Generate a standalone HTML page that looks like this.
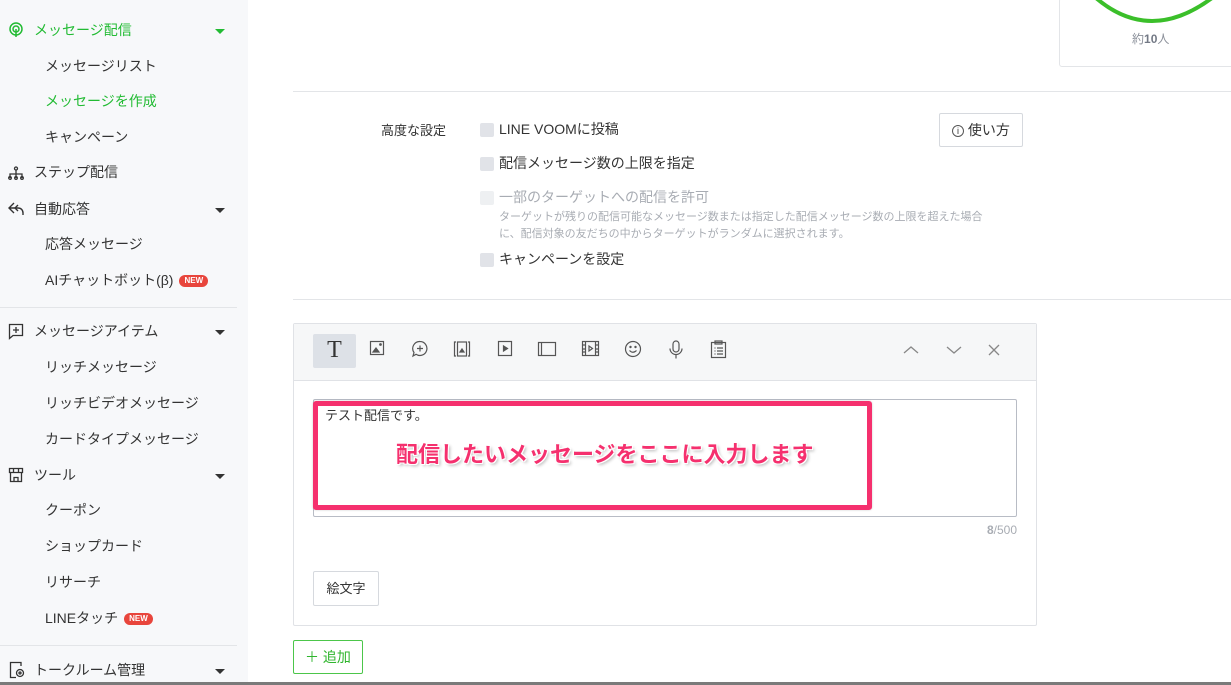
<!DOCTYPE html>
<html><head><meta charset="utf-8"><style>
*{box-sizing:border-box;margin:0;padding:0}
body{width:1231px;height:685px;overflow:hidden;background:#fff;font-family:"Liberation Sans","Noto Sans CJK JP",sans-serif;color:#333;position:relative}
.abs{position:absolute}
#side{left:0;top:0;width:248px;height:685px;background:#f7f8fa}
.it{position:absolute;font-size:14px;color:#333;line-height:20px}
.sub{left:45px}
.top{left:34px}
.arr{position:absolute;left:215px;width:0;height:0;border-left:5px solid transparent;border-right:5px solid transparent;border-top:5px solid #333}
.new{display:inline-block;background:#e8453c;color:#fff;font-size:8px;font-weight:bold;border-radius:7px;padding:1px 5px;line-height:10px;vertical-align:2px;margin-left:6px}
.hr{position:absolute;height:1px;background:#e3e5e8}
.cb{position:absolute;width:14px;height:14px;background:#e1e3e8;border-radius:2px;left:480px}
.lbl{position:absolute;left:499px;font-size:14px;color:#333;line-height:20px}
.ti{position:absolute;top:340px}
</style></head><body>
<div id="side" class="abs">
<svg class="abs" style="left:8px;top:22px" width="16" height="16" viewBox="0 0 16 16" fill="none" stroke="#22bb33" stroke-width="1.5"><circle cx="8" cy="7" r="6"/><circle cx="8" cy="7" r="3"/><path d="M8 7v8"/></svg>
<div class="it top" style="top:20px;color:#22bb33">メッセージ配信</div><div class="arr" style="top:29px;border-top-color:#22bb33"></div>
<div class="it sub" style="top:56px">メッセージリスト</div>
<div class="it sub" style="top:91px;color:#22bb33">メッセージを作成</div>
<div class="it sub" style="top:127px">キャンペーン</div>
<svg class="abs" style="left:8px;top:166px" width="16" height="14" viewBox="0 0 16 14" fill="none" stroke="#333" stroke-width="1.3"><circle cx="8" cy="2.5" r="1.5"/><path d="M8 4v4M2 12V8h12v4M8 8v4"/><circle cx="2" cy="12" r="1.3"/><circle cx="8" cy="12" r="1.3"/><circle cx="14" cy="12" r="1.3"/></svg>
<div class="it top" style="top:162px">ステップ配信</div>
<svg class="abs" style="left:7px;top:201px" width="18" height="16" viewBox="0 0 18 16" fill="none" stroke="#333" stroke-width="1.4"><path d="M7 2L2 7l5 5M2 7h9c3 0 5 2 5 5v2"/><path d="M11 4l-3 3 3 3"/></svg>
<div class="it top" style="top:199px">自動応答</div><div class="arr" style="top:208px"></div>
<div class="it sub" style="top:234px">応答メッセージ</div>
<div class="it sub" style="top:270px">AIチャットボット(β)<span class="new">NEW</span></div>
<div class="hr" style="left:0;top:307px;width:237px"></div>
<svg class="abs" style="left:8px;top:323px" width="16" height="17" viewBox="0 0 16 17" fill="none" stroke="#333" stroke-width="1.3"><path d="M1.5 1.5h13v11H5l-3.5 3z"/><path d="M8 4v6M5 7h6"/></svg>
<div class="it top" style="top:321px">メッセージアイテム</div><div class="arr" style="top:330px"></div>
<div class="it sub" style="top:357px">リッチメッセージ</div>
<div class="it sub" style="top:393px">リッチビデオメッセージ</div>
<div class="it sub" style="top:429px">カードタイプメッセージ</div>
<svg class="abs" style="left:8px;top:467px" width="16" height="16" viewBox="0 0 16 16" fill="none" stroke="#333" stroke-width="1.3"><path d="M1.5 1.5h13v4h-13zM2.5 5.5v9h11v-9M6 14.5v-4h4v4M5.5 1.5v4M10.5 1.5v4"/></svg>
<div class="it top" style="top:465px">ツール</div><div class="arr" style="top:474px"></div>
<div class="it sub" style="top:500px">クーポン</div>
<div class="it sub" style="top:536px">ショップカード</div>
<div class="it sub" style="top:572px">リサーチ</div>
<div class="it sub" style="top:608px">LINEタッチ<span class="new">NEW</span></div>
<div class="hr" style="left:0;top:645px;width:237px"></div>
<svg class="abs" style="left:9px;top:661px" width="16" height="18" viewBox="0 0 16 18" fill="none" stroke="#333" stroke-width="1.3"><path d="M12 5V1.5H1.5v15H7"/><circle cx="11" cy="12" r="3.5"/><circle cx="11" cy="12" r="1"/></svg>
<div class="it top" style="top:660px">トークルーム管理</div><div class="arr" style="top:669px"></div>
</div>

<div class="abs" style="left:1059px;top:-2px;width:180px;height:69px;border:1px solid #e3e5e8;border-radius:3px"></div>
<svg class="abs" style="left:1090px;top:0" width="130" height="25" viewBox="0 0 130 25"><path d="M6 -2 Q60 44 122 -2" fill="none" stroke="#3bbf2a" stroke-width="4"/></svg>
<div class="abs" style="left:1132px;top:30px;font-size:12px;color:#8a8f99">約<b style="color:#737985">10</b>人</div>

<div class="hr" style="left:293px;top:91px;width:938px"></div>
<div class="abs" style="left:381px;top:120px;font-size:13px;color:#333">高度な設定</div>
<div class="cb" style="top:123px"></div><div class="lbl" style="top:119px">LINE VOOMに投稿</div>
<div class="cb" style="top:157px"></div><div class="lbl" style="top:153px">配信メッセージ数の上限を指定</div>
<div class="cb" style="top:191px;background:#eef0f2"></div><div class="lbl" style="top:187px;color:#a8acb3">一部のターゲットへの配信を許可</div>
<div class="abs" style="left:499px;top:209px;font-size:11px;line-height:17px;color:#a8acb3;width:500px">ターゲットが残りの配信可能なメッセージ数または指定した配信メッセージ数の上限を超えた場合<br>に、配信対象の友だちの中からターゲットがランダムに選択されます。</div>
<div class="cb" style="top:253px"></div><div class="lbl" style="top:249px">キャンペーンを設定</div>
<div class="abs" style="left:939px;top:113px;width:84px;height:34px;border:1px solid #d6d9de;border-radius:2px;font-size:14px;line-height:32px;text-align:center;color:#333"><span style="display:inline-block;width:12px;height:12px;border:1px solid #555;border-radius:50%;font-size:9px;line-height:10px;vertical-align:1px">i</span> 使い方</div>
<div class="hr" style="left:293px;top:299px;width:938px"></div>

<div class="abs" style="left:293px;top:323px;width:744px;height:303px;border:1px solid #e0e2e6;border-radius:2px"></div>
<div class="abs" style="left:294px;top:324px;width:742px;height:57px;background:#f6f7f8;border-bottom:1px solid #e0e2e6"></div>
<div class="abs" style="left:313px;top:334px;width:43px;height:34px;background:#dde1e7;border-radius:2px;font-family:'Liberation Serif',serif;font-size:24px;text-align:center;line-height:33px;color:#333">T</div>
<svg class="ti" style="left:369px" width="16" height="16" viewBox="0 0 16 16" fill="none" stroke="#555" stroke-width="1.2"><rect x="1.5" y="1.5" width="13" height="13"/><path d="M4 12l3-4 3 4z" fill="#555"/><circle cx="11.5" cy="4.5" r=".8" fill="#555"/></svg>
<svg class="ti" style="left:411px" width="18" height="18" viewBox="0 0 18 18" fill="none" stroke="#555" stroke-width="1.2"><path d="M9 1.5a7 7 0 1 1-4 12.8L2 16l1-3.5A7 7 0 0 1 9 1.5z"/><path d="M9 5.5v6M6 8.5h6"/></svg>
<svg class="ti" style="left:453px" width="18" height="18" viewBox="0 0 18 18" fill="none" stroke="#555" stroke-width="1.2"><path d="M3 2H1.5v14H3M15 2h1.5v14H15"/><rect x="4.5" y="2" width="9" height="14"/><path d="M7 12l2-3 2 3z" fill="#555"/></svg>
<svg class="ti" style="left:497px" width="16" height="18" viewBox="0 0 16 18" fill="none" stroke="#555" stroke-width="1.2"><rect x="1.5" y="1.5" width="13" height="14"/><path d="M6.5 6v5l4-2.5z" fill="#555"/></svg>
<svg class="ti" style="left:537px" width="20" height="18" viewBox="0 0 20 18" fill="none" stroke="#555" stroke-width="1.2"><rect x="1.5" y="2.5" width="17" height="13"/><path d="M4.5 2.5v13"/></svg>
<svg class="ti" style="left:581px" width="19" height="18" viewBox="0 0 19 18" fill="none" stroke="#555" stroke-width="1.2"><rect x="1.5" y="1.5" width="16" height="14"/><path d="M4.5 1.5v14M14.5 1.5v14M1.5 5h3M1.5 9h3M1.5 12h3M14.5 5h3M14.5 9h3M14.5 12h3M8 6v5l3.5-2.5z"/></svg>
<svg class="ti" style="left:624px" width="18" height="18" viewBox="0 0 18 18" fill="none" stroke="#555" stroke-width="1.2"><circle cx="9" cy="9" r="7.5"/><path d="M5.5 10.5q3.5 3.5 7 0"/><circle cx="6.5" cy="7" r=".6" fill="#555"/><circle cx="11.5" cy="7" r=".6" fill="#555"/></svg>
<svg class="ti" style="left:668px" width="16" height="20" viewBox="0 0 16 20" fill="none" stroke="#555" stroke-width="1.2"><rect x="5" y="1" width="6" height="11" rx="3"/><path d="M2 8.5a6 6 0 0 0 12 0M8 14.5v4"/></svg>
<svg class="ti" style="left:710px" width="17" height="19" viewBox="0 0 17 19" fill="none" stroke="#555" stroke-width="1.2"><rect x="1.5" y="2.5" width="14" height="15"/><rect x="5" y="1" width="7" height="3"/><path d="M4.5 8h1M7 8h6M4.5 11h1M7 11h6M4.5 14h1M7 14h6"/></svg>
<svg class="abs" style="left:903px;top:343px" width="110" height="14" viewBox="0 0 110 14" fill="none" stroke="#888" stroke-width="1.3"><path d="M1 10l7-6 7 6M44 4l7 6 7-6M86 2l10 10M96 2l-10 10"/></svg>

<div class="abs" style="left:313px;top:399px;width:704px;height:118px;border:1px solid #b8bcc5;border-radius:2px"></div>
<div class="abs" style="left:313px;top:401px;width:559px;height:109px;border:5px solid #f5306e;border-radius:3px;box-shadow:0 0 2px rgba(0,0,0,.2)"></div>
<div class="abs" style="left:325px;top:405px;font-size:13px;color:#333">テスト配信です。</div>
<div class="abs" style="left:396px;top:437px;white-space:nowrap;font-size:22px;font-weight:bold;color:#f5306e;text-shadow:1px 1px 0 #fff,-1px -1px 0 #fff,1px -1px 0 #fff,-1px 1px 0 #fff,2px 2px 3px rgba(0,0,0,.3)">配信したいメッセージをここに入力します</div>
<div class="abs" style="left:960px;top:523px;width:57px;text-align:right;font-size:12px;color:#a8acb3"><b>8</b>/500</div>
<div class="abs" style="left:313px;top:571px;width:66px;height:35px;border:1px solid #d6d9de;border-radius:2px;font-size:13px;line-height:33px;text-align:center;color:#333">絵文字</div>
<div class="abs" style="left:293px;top:640px;width:70px;height:34px;border:1px solid #4cc64a;border-radius:2px;font-size:14px;line-height:32px;text-align:center;color:#2fb52d">＋ 追加</div>
<div class="abs" style="left:0;top:682px;width:1231px;height:3px;background:#7a7a7a"></div>
</body></html>
